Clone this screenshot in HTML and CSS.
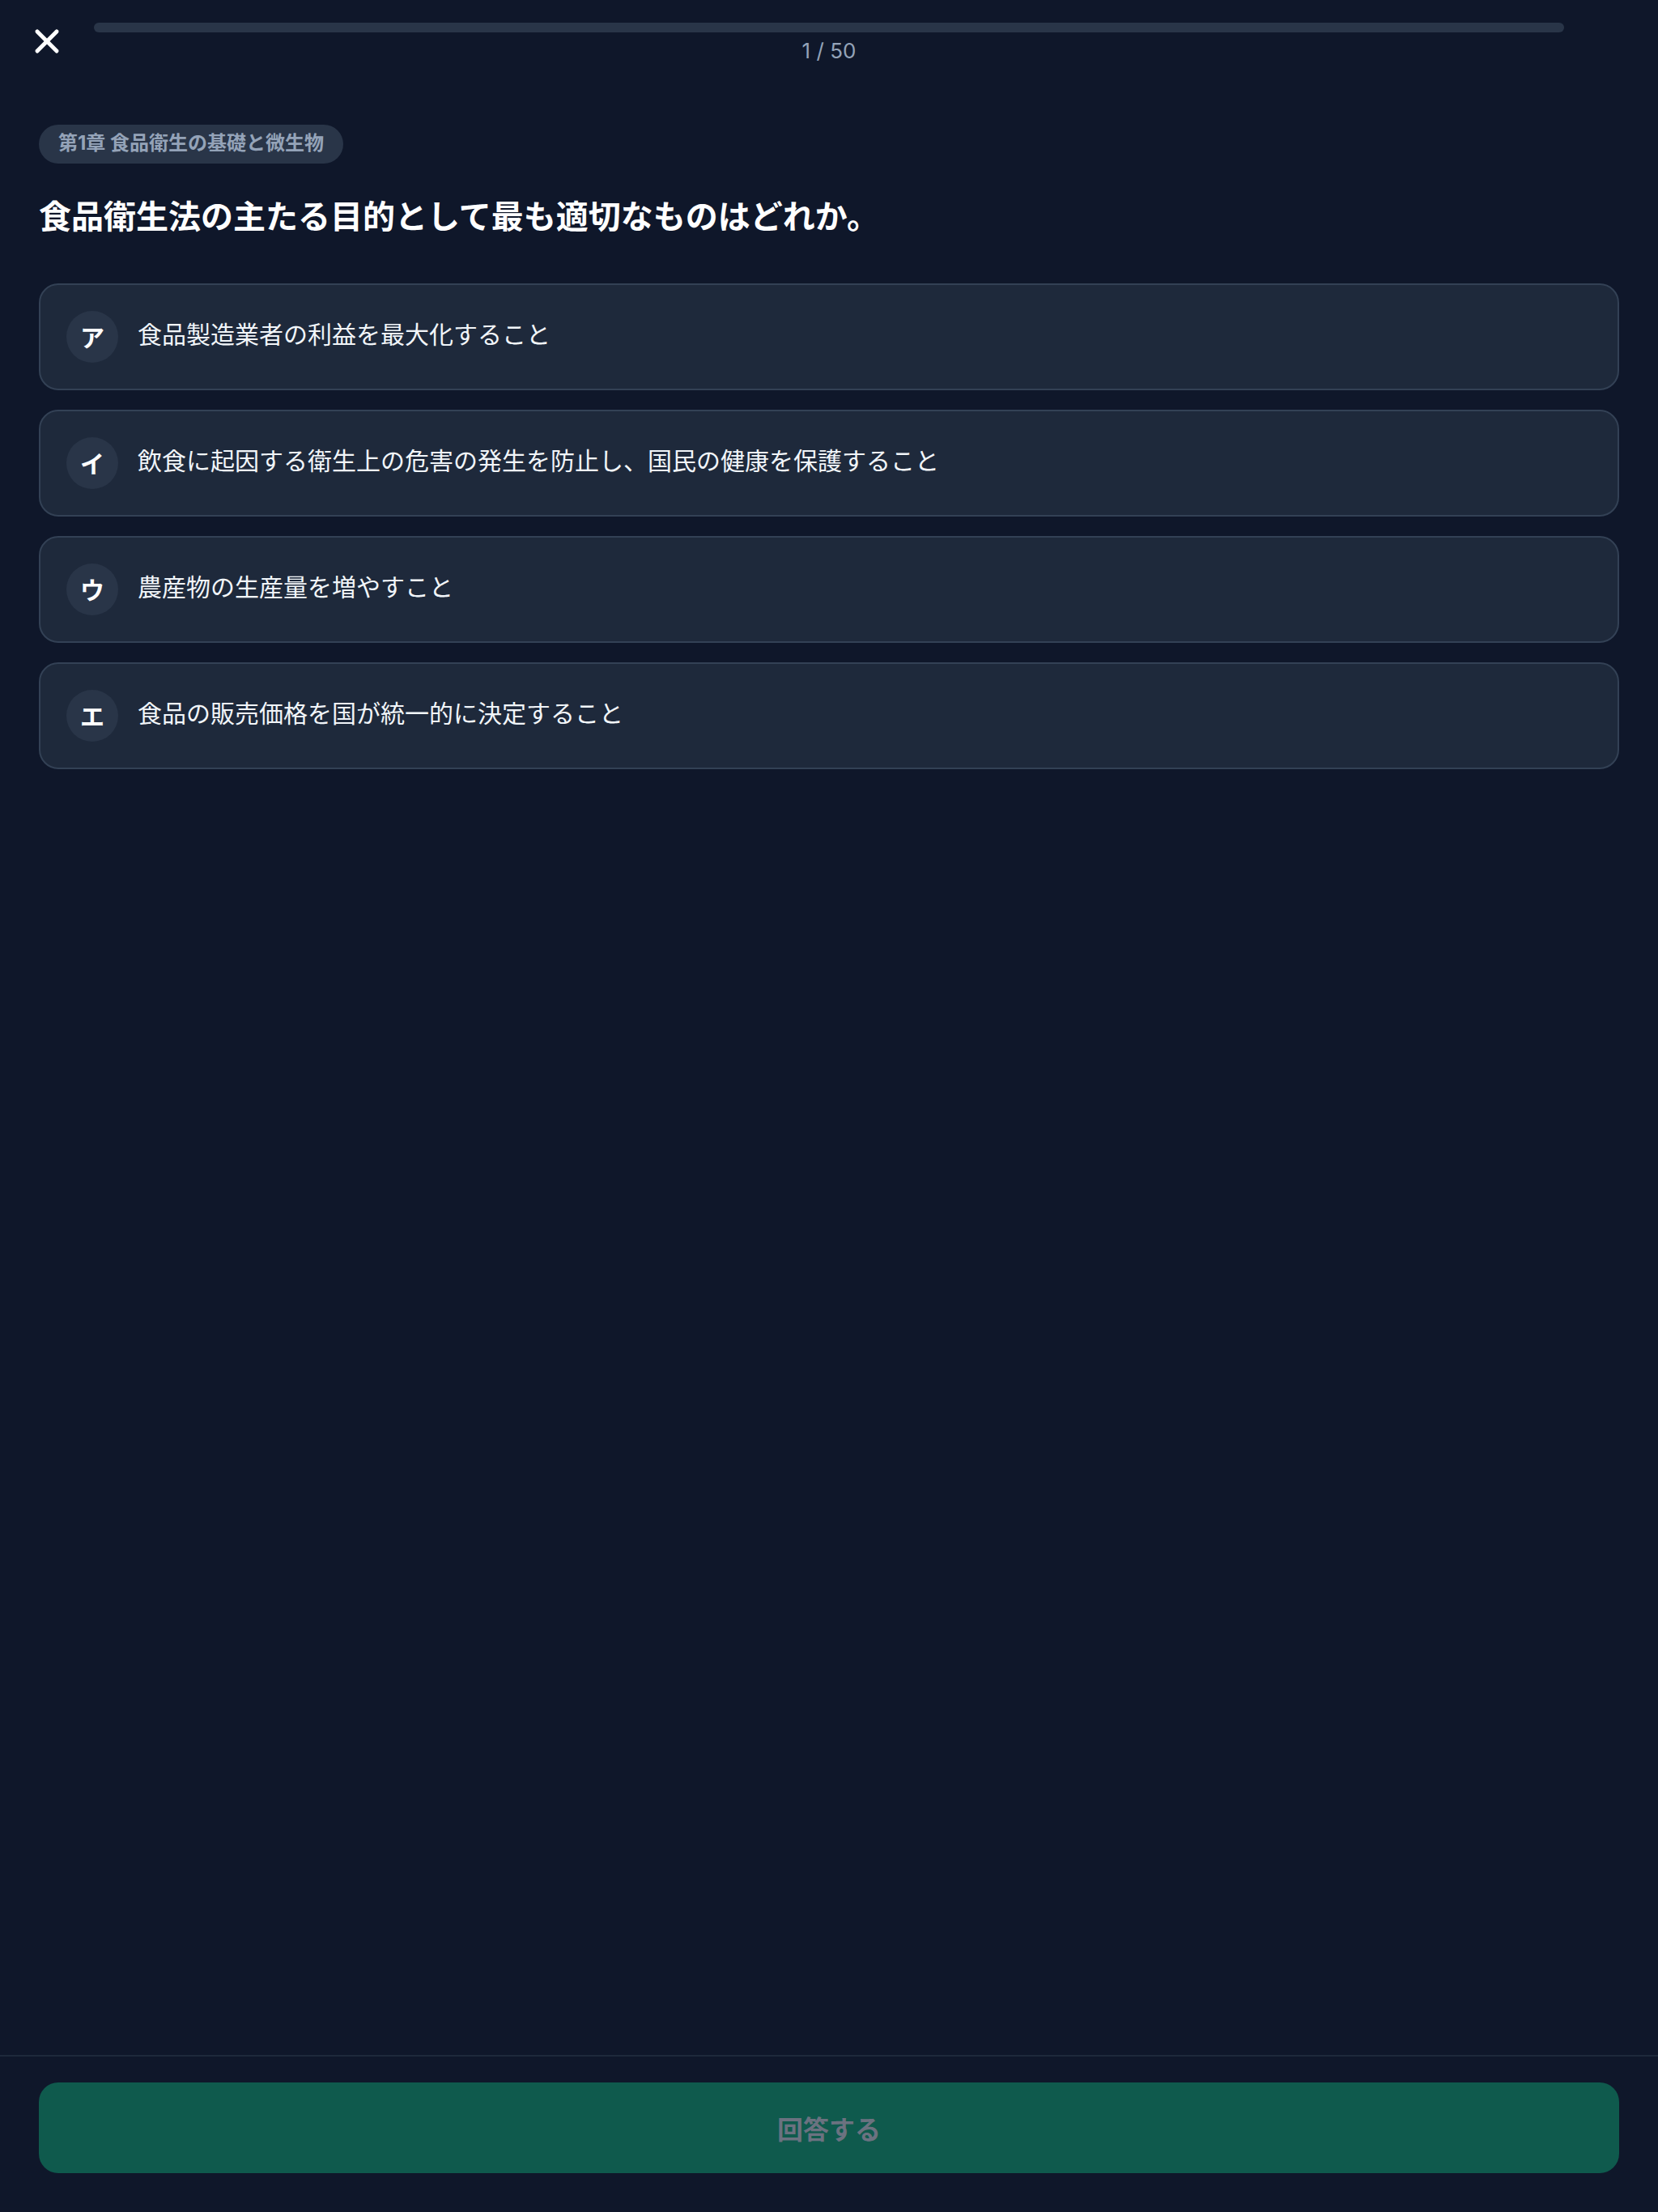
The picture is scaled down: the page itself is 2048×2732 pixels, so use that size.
FILE: index.html
```html
<!DOCTYPE html>
<html lang="ja">
<head>
<meta charset="utf-8">
<title>問題 1 / 50</title>
<link rel="stylesheet" href="styles.css">
</head>
<body>
<div class="app">
  <header class="top">
    <button class="close" aria-label="閉じる">
      <svg viewBox="0 0 24 24" width="48" height="48" fill="none" stroke="#ffffff" stroke-width="2.5" stroke-linecap="round" stroke-linejoin="round"><path d="M18 6 6 18"/><path d="m6 6 12 12"/></svg>
    </button>
    <div class="progress">
      <div class="track"><div class="fill" style="width:0%"></div></div>
      <div class="count">1 / 50</div>
    </div>
    <div class="spacer"></div>
  </header>

  <main class="content">
    <span class="chip">第1章 食品衛生の基礎と微生物</span>
    <h1 class="question">食品衛生法の主たる目的として最も適切なものはどれか。</h1>
    <ul class="options">
      <li class="option"><span class="badge">ア</span><span class="label">食品製造業者の利益を最大化すること</span></li>
      <li class="option"><span class="badge">イ</span><span class="label">飲食に起因する衛生上の危害の発生を防止し、国民の健康を保護すること</span></li>
      <li class="option"><span class="badge">ウ</span><span class="label">農産物の生産量を増やすこと</span></li>
      <li class="option"><span class="badge">エ</span><span class="label">食品の販売価格を国が統一的に決定すること</span></li>
    </ul>
  </main>

  <footer class="bottom">
    <button class="submit" disabled>回答する</button>
  </footer>
</div>
</body>
</html>
```

FILE: styles.css
```css
* { box-sizing: border-box; }
html, body { margin: 0; padding: 0; }
body {
  background: #0f172a;
  color: #f8fafc;
  font-family: Inter, "Noto Sans CJK JP", "Noto Sans", sans-serif;
}
.app {
  min-height: 100vh;
  display: flex;
  flex-direction: column;
}
.top {
  display: flex;
  align-items: flex-start;
  gap: 34px;
  padding: 28px 34px 0;
}
.close {
  width: 48px;
  height: 48px;
  margin-top: -1px;
  padding: 0;
  border: 0;
  background: transparent;
  display: flex;
  align-items: center;
  justify-content: center;
  flex: none;
}
.close svg { display: block; }
.spacer { width: 48px; flex: none; }
.progress { flex: 1; display: flex; flex-direction: column; align-items: center; }
.track {
  width: 100%;
  height: 12px;
  border-radius: 6px;
  background: #293548;
  overflow: hidden;
}
.fill { height: 100%; background: #10b981; }
.count {
  margin-top: 6px;
  font-size: 26px;
  line-height: 34px;
  color: #94a3b8;
}
.content {
  flex: 1;
  padding: 74px 48px 0;
}
.chip {
  display: inline-block;
  padding: 7px 24px 9px;
  border-radius: 24px;
  background: #293548;
  color: #94a3b8;
  font-size: 24px;
  line-height: 32px;
  font-weight: 700;
}
.question {
  margin: 38px 0 54px;
  font-size: 40px;
  line-height: 56px;
  font-weight: 700;
  color: #ffffff;
}
.options {
  list-style: none;
  margin: 0;
  padding: 0;
  display: flex;
  flex-direction: column;
  gap: 24px;
}
.option {
  display: flex;
  align-items: center;
  gap: 24px;
  padding: 32px;
  background: #1e293b;
  border: 2px solid #334155;
  border-radius: 24px;
}
.badge {
  width: 64px;
  height: 64px;
  flex: none;
  border-radius: 50%;
  background: #293548;
  display: flex;
  align-items: center;
  justify-content: center;
  padding-bottom: 2px;
  font-size: 30px;
  font-weight: 700;
  color: #ffffff;
}
.label {
  font-size: 30px;
  line-height: 44px;
  padding-bottom: 6px;
  color: #f1f5f9;
}
.bottom {
  border-top: 2px solid #1e293b;
  padding: 32px 48px 48px;
}
.submit {
  width: 100%;
  height: 112px;
  border: 0;
  border-radius: 24px;
  background: #0f5a4d;
  color: #6b7280;
  font-family: inherit;
  font-size: 32px;
  font-weight: 700;
}
```
